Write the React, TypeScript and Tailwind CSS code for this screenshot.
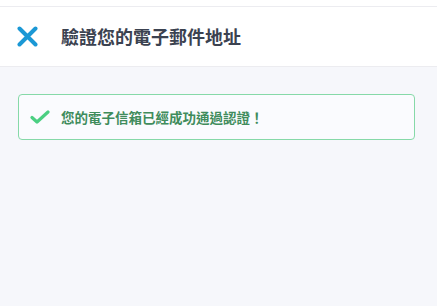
export default function App() {
  return (
    <div
      className="flex h-[306px] w-[437px] flex-col bg-[#f6f7fb]"
      style={{ fontFamily: '"Noto Sans CJK TC", "Noto Sans", sans-serif' }}
    >
      <div className="h-[6px] bg-white" />
      <header className="flex h-[61px] items-center border-y border-[#ececf0] bg-white pl-[17px]">
        <svg width="21" height="21" viewBox="0 0 21 21" className="shrink-0">
          <path
            d="M2.5 2.5 L18.5 18.5 M18.5 2.5 L2.5 18.5"
            stroke="#1b98d5"
            strokeWidth="4"
            strokeLinecap="round"
          />
        </svg>
        <h1 className="ml-[23px] text-[18px] font-bold text-[#3b4250]">驗證您的電子郵件地址</h1>
      </header>
      <main className="pt-[27px] pl-[18px] pr-[22px]">
        <div className="flex h-[46px] items-center rounded-[4px] border border-[#86d9a8] bg-[#fafbfe] pl-[11px]">
          <svg width="20" height="14" viewBox="0 0 20 14" className="shrink-0">
            <path
              d="M2 7.5 L7 12 L18 2"
              fill="none"
              stroke="#4bcf82"
              strokeWidth="3.2"
              strokeLinecap="round"
              strokeLinejoin="round"
            />
          </svg>
          <p className="ml-[11px] text-[13.5px] font-bold text-[#3f8c5c]">您的電子信箱已經成功通過認證！</p>
        </div>
      </main>
    </div>
  );
}
